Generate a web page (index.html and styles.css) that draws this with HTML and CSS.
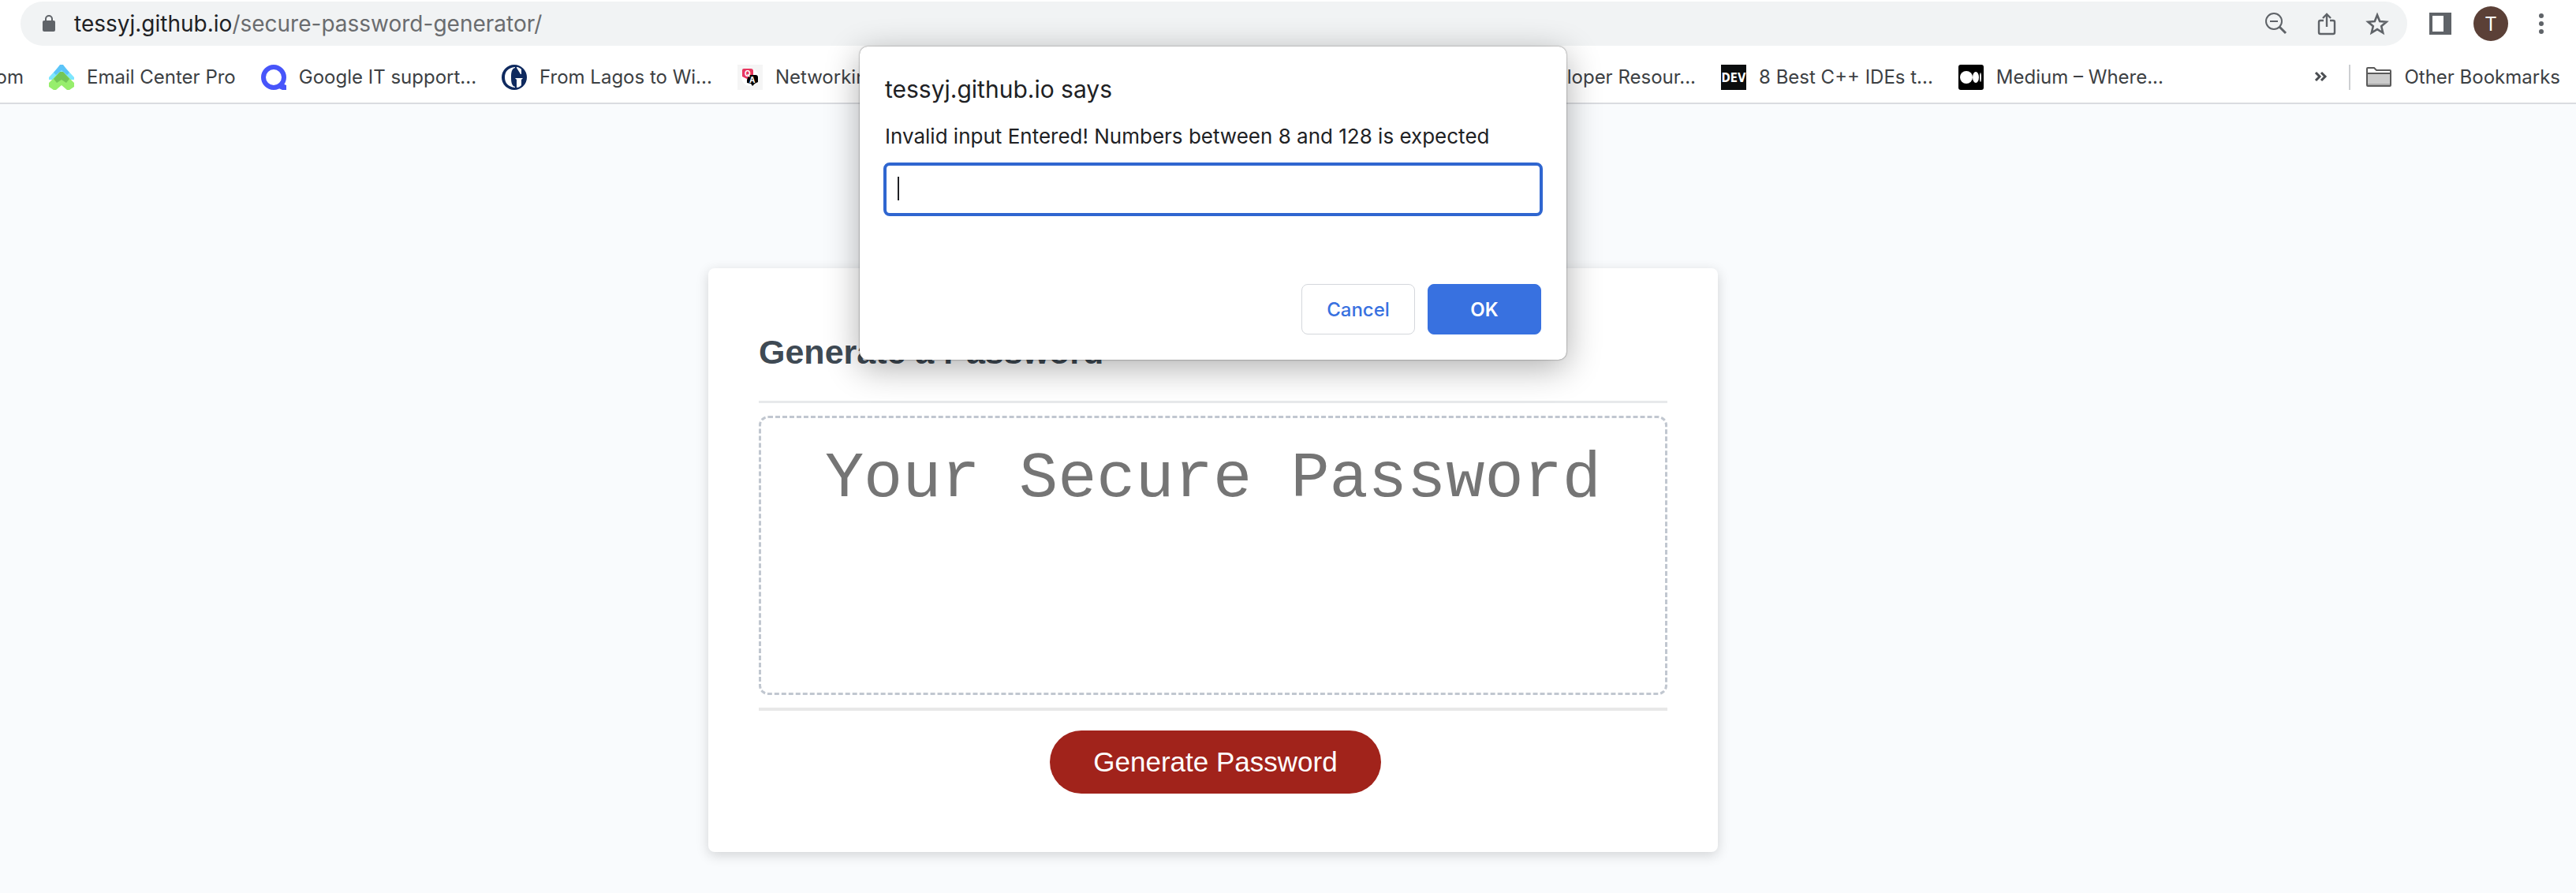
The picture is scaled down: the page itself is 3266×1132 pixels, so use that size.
FILE: index.html
```html
<!DOCTYPE html>
<html lang="en">
<head>
<meta charset="utf-8">
<title>Password Generator</title>
<link rel="stylesheet" href="styles.css">
</head>
<body>
<header class="browser">
  <div class="toolbar">
    <div class="omnibox">
      <svg class="lock" viewBox="0 0 16 22" width="16" height="22" aria-hidden="true"><rect x="0" y="7" width="16" height="14" rx="2" fill="#5f6368"/><path d="M4 8V5a4 4 0 0 1 8 0v3" fill="none" stroke="#5f6368" stroke-width="2"/></svg>
      <a class="url" href="#"><span class="host">tessyj.github.io</span>/secure-password-generator/</a>
      <div class="omnibox-actions">
        <button class="icon-button" type="button" aria-label="Zoom"><svg viewBox="0 0 32 32" width="32" height="32" fill="none" stroke="#5f6368"><circle cx="13" cy="13" r="10" stroke-width="2"/><path d="M8 13h10" stroke-width="2"/><path d="M20 20l8 8" stroke-width="3"/></svg></button>
        <button class="icon-button" type="button" aria-label="Share"><svg viewBox="0 0 32 32" width="32" height="32" fill="none" stroke="#5f6368" stroke-width="2.4"><path d="M12 12H8a2 2 0 0 0-2 2v13a2 2 0 0 0 2 2h16a2 2 0 0 0 2-2V14a2 2 0 0 0-2-2h-4M16 20V4M11 9l5-5 5 5"/></svg></button>
        <button class="icon-button" type="button" aria-label="Bookmark this tab"><svg viewBox="0 0 32 32" width="32" height="32" fill="none" stroke="#5f6368" stroke-width="2.6"><path d="M16 5l3.2 8 8.4.7-6.4 5.5 2 8.3-7.2-4.4-7.200 4.400 2-8.300-6.400-5.500 8.400-.7z"/></svg></button>
      </div>
    </div>
    <button class="icon-button" type="button" aria-label="Side panel"><svg viewBox="0 0 32 32" width="32" height="32"><path fill="#5f6368" fill-rule="evenodd" d="M2 2h28v28H2zM6 6v20h14V6z"/></svg></button>
    <button class="avatar" type="button" aria-label="Profile">T</button>
    <button class="icon-button" type="button" aria-label="Menu"><svg viewBox="0 0 32 32" width="32" height="32" fill="#5f6368"><circle cx="16" cy="6" r="3"/><circle cx="16" cy="16" r="3"/><circle cx="16" cy="26" r="3"/></svg></button>
  </div>
  <nav class="bookmarks" aria-label="Bookmarks">
    <a class="bookmark bookmark-clipped" href="#">om</a>
    <a class="bookmark" href="#"><svg viewBox="0 0 32 32" width="32" height="32"><path fill="#7ee6ff" d="M0 16L13 2h6l13 14v3h-5L16 9 5 19H0z"/><path fill="#5cc4f8" d="M11 4l3-4h4l3 4 5 6-3 3-7-6-7 6-3-3z"/><path fill="#97ee6c" d="M0 23l13-13h6l13 13v5l-6 4h-3l-7-6-7 6H6l-6-4z"/><path fill="#74c657" d="M6 18l8-9h4l8 9-4 5-6-4-6 4z"/></svg>Email Center Pro</a>
    <a class="bookmark" href="#"><svg viewBox="0 0 32 32" width="32" height="32"><ellipse cx="16" cy="16" rx="13" ry="13" fill="none" stroke="#4755fa" stroke-width="6"/><path fill="#4755fa" d="M18 28l9-4 5 2v6h-5z"/></svg>Google IT support...</a>
    <a class="bookmark" href="#"><svg viewBox="0 0 32 32" width="32" height="32"><circle cx="16" cy="16" r="16" fill="#0f2a5f"/><path fill="#fff" d="M17 3C8 4 4 9 4 16s4 12 13 13v-1c-4-1-5-5-5-12s1-11 5-12zM19 3c3 0 5 2 6 3v6h-1l-5-8zM17 17h10l-2 2v7c-1 1-3 3-6 3V19z"/></svg>From Lagos to Wi...</a>
    <a class="bookmark bookmark-wide" href="#"><svg viewBox="0 0 32 32" width="32" height="32"><path fill="#f5f5f5" d="M0 0h32v32H0z"/><circle cx="16" cy="16" r="11" fill="#fff"/><path fill="#e8375f" d="M8 5h9a3 3 0 0 1 3 3v10h-8l-6-3V7a2 2 0 0 1 2-2z"/><path fill="#000" d="M15 13h8a3 3 0 0 1 3 3v6l-4 2-3 3-2-3-5-1v-4z"/><text class="qa" x="9" y="15">Q</text><text class="qa" x="15" y="23">A</text></svg>Networking</a>
    <a class="bookmark" href="#"><svg viewBox="0 0 32 32" width="32" height="32"><path fill="#dadce0" d="M0 0h32v32H0z"/></svg>Developer Resour...</a>
    <a class="bookmark" href="#"><svg viewBox="0 0 32 32" width="32" height="32"><path fill="#0b0d0e" d="M0 0h32v32H0z"/><text class="dev" x="16" y="22">DEV</text></svg>8 Best C++ IDEs t...</a>
    <a class="bookmark" href="#"><svg viewBox="0 0 32 32" width="32" height="32"><rect width="32" height="32" rx="3"/><g fill="#fff"><circle cx="10" cy="16" r="8"/><ellipse cx="22" cy="16" rx="4" ry="7"/><ellipse cx="28" cy="16" rx="1" ry="6"/></g></svg>Medium – Where...</a>
    <div class="bookmarks-end">
      <button class="icon-button" type="button" aria-label="More bookmarks"><svg viewBox="0 0 32 32" width="32" height="32" fill="none" stroke="#4a4d51" stroke-width="3"><path d="M10 10l5 5-5 5M17 10l5 5-5 5"/></svg></button>
      <span class="divider"></span>
      <a class="bookmark" href="#"><svg viewBox="0 0 32 32" width="32" height="32"><path fill="#fff" stroke="#5a5a5a" stroke-width="2" d="M1 5a1 1 0 0 1 1-1h8l3 3h17a1 1 0 0 1 1 1v18a1 1 0 0 1-1 1H2a1 1 0 0 1-1-1z"/><path fill="#cbcbcb" d="M2 11h28v13H2z"/><path fill="#a9a9a9" d="M2 24h28v2H2z"/><path fill="#5a5a5a" d="M1 10h30v2H1z"/></svg>Other Bookmarks</a>
    </div>
  </nav>
</header>
<main class="page">
  <section class="card">
    <h2 class="card-title">Generate a Password</h2>
    <textarea class="password" readonly aria-label="Generated password" placeholder="Your Secure Password"></textarea>
    <div class="card-footer"><button class="generate" type="button">Generate Password</button></div>
  </section>
</main>
<div class="overlay">
  <form class="dialog" role="dialog" aria-labelledby="dialog-title">
    <h1 class="dialog-title" id="dialog-title">tessyj.github.io says</h1>
    <label class="dialog-label" for="answer">Invalid input Entered! Numbers between 8 and 128 is expected</label>
    <div class="field"><input class="answer" id="answer" type="text"><span class="caret"></span></div>
    <div class="dialog-actions">
      <button class="dialog-button" type="button">Cancel</button>
      <button class="dialog-button primary" type="button">OK</button>
    </div>
  </form>
</div>
</body>
</html>
```
FILE: styles.css
```css
* { box-sizing: border-box; }

body {
  margin: 0;
  min-height: 100vh;
  position: relative;
  background: #f9fbfd;
  font-family: Inter, Roboto, "Liberation Sans", sans-serif;
  color: #202124;
}

button, input, textarea { font: inherit; margin: 0; }
svg { display: block; flex: none; }

/* Browser chrome */
.browser { background: #fff; border-bottom: 2px solid #dadce0; }

.toolbar {
  display: flex;
  align-items: center;
  gap: 26px;
  height: 60px;
  padding: 0 28px 0 26px;
}

.omnibox {
  flex: 1;
  display: flex;
  align-items: center;
  height: 56px;
  padding: 0 22px 0 28px;
  border-radius: 28px;
  background: #f1f3f4;
}

.url {
  flex: 1;
  margin-left: 24px;
  font-size: 28px;
  line-height: 40px;
  color: #6a6c6f;
  text-decoration: none;
}

.host { color: #202124; }
.omnibox-actions { display: flex; gap: 32px; }

.icon-button {
  flex: none;
  width: 32px;
  height: 32px;
  padding: 0;
  border: 0;
  background: none;
}

.avatar {
  flex: none;
  width: 44px;
  height: 44px;
  padding: 0;
  border: 0;
  border-radius: 50%;
  background: #5b4037;
  color: #fff;
  font-size: 24px;
}

.bookmarks {
  display: flex;
  align-items: center;
  gap: 32px;
  height: 70px;
  padding: 6px 20px 0 0;
}

.bookmark {
  flex: none;
  display: flex;
  align-items: center;
  gap: 16px;
  font-size: 24px;
  line-height: 32px;
  color: #3c4043;
  text-decoration: none;
  white-space: nowrap;
}

.bookmark-clipped { width: 30px; justify-content: flex-end; overflow: hidden; }
.bookmark-wide { width: 914px; }
.bookmarks-end { display: flex; align-items: center; gap: 20px; margin-left: auto; }
.divider { width: 2px; height: 32px; background: #cdcfd2; }
.qa { font-size: 10px; font-weight: 700; fill: #fff; }
.dev { font-family: "DejaVu Sans Condensed", "DejaVu Sans", sans-serif; font-size: 15px; font-weight: 700; fill: #fff; text-anchor: middle; }

/* Generator page */
.page {
  display: flex;
  justify-content: center;
  padding: 208px 190px 52px 0;
}

.card {
  width: 1280px;
  padding: 64px;
  border-radius: 8px;
  background: #fff;
  box-shadow: 0 4px 16px rgba(0, 0, 0, 0.16);
  font-family: "Liberation Sans", Arial, sans-serif;
}

.card-title {
  margin: 0 0 16px;
  padding-bottom: 20px;
  border-bottom: 3px solid #e7e9eb;
  font-size: 43px;
  line-height: 84px;
  color: #3f4a54;
}

.password {
  display: block;
  width: 100%;
  height: 354px;
  padding: 28px 24px;
  border: 3px dashed #c1c7d0;
  border-radius: 12px;
  background: #fff;
  font-family: "Liberation Mono", "Courier New", monospace;
  font-size: 82px;
  line-height: 100px;
  text-align: center;
  resize: none;
  overflow: hidden;
}

.password::placeholder { color: #757575; opacity: 1; }

.card-footer {
  margin-top: 16px;
  padding: 25px 0 10px 6px;
  border-top: 4px solid #e8e8e8;
  text-align: center;
}

.generate {
  height: 80px;
  padding: 0 55px;
  border: 0;
  border-radius: 40px;
  background: #a1231b;
  color: #fff;
  font-size: 35px;
}

/* Prompt dialog */
.overlay {
  position: absolute;
  top: 59px;
  left: 0;
  right: 190px;
  display: flex;
  justify-content: center;
}

.dialog {
  width: 896px;
  padding: 34px 32px 32px;
  border-radius: 10px;
  background: #fff;
  box-shadow: 0 0 2px rgba(0, 0, 0, 0.6), 0 10px 44px rgba(0, 0, 0, 0.32);
}

.dialog-title {
  margin: 0 0 20px;
  font-size: 30px;
  font-weight: 400;
  line-height: 40px;
}

.dialog-label {
  display: block;
  font-size: 26px;
  line-height: 40px;
}

.field { position: relative; margin: 13px -2px 86px; }

.answer {
  display: block;
  width: 100%;
  height: 68px;
  padding: 0 14px;
  border: 4px solid #2f66d0;
  border-radius: 8px;
  background: #fff;
  font-size: 26px;
  outline: 0;
}

.caret {
  position: absolute;
  top: 18px;
  left: 18px;
  width: 2px;
  height: 30px;
  background: #202124;
}

.dialog-actions { display: flex; justify-content: flex-end; gap: 16px; }

.dialog-button {
  width: 144px;
  height: 64px;
  padding: 0;
  border: 1px solid #d4d7dc;
  border-radius: 8px;
  background: #fff;
  color: #3871e0;
  font-size: 24px;
  font-weight: 500;
}

.dialog-button.primary { border-color: #3871e0; background: #3871e0; color: #fff; font-weight: 600; }
```
